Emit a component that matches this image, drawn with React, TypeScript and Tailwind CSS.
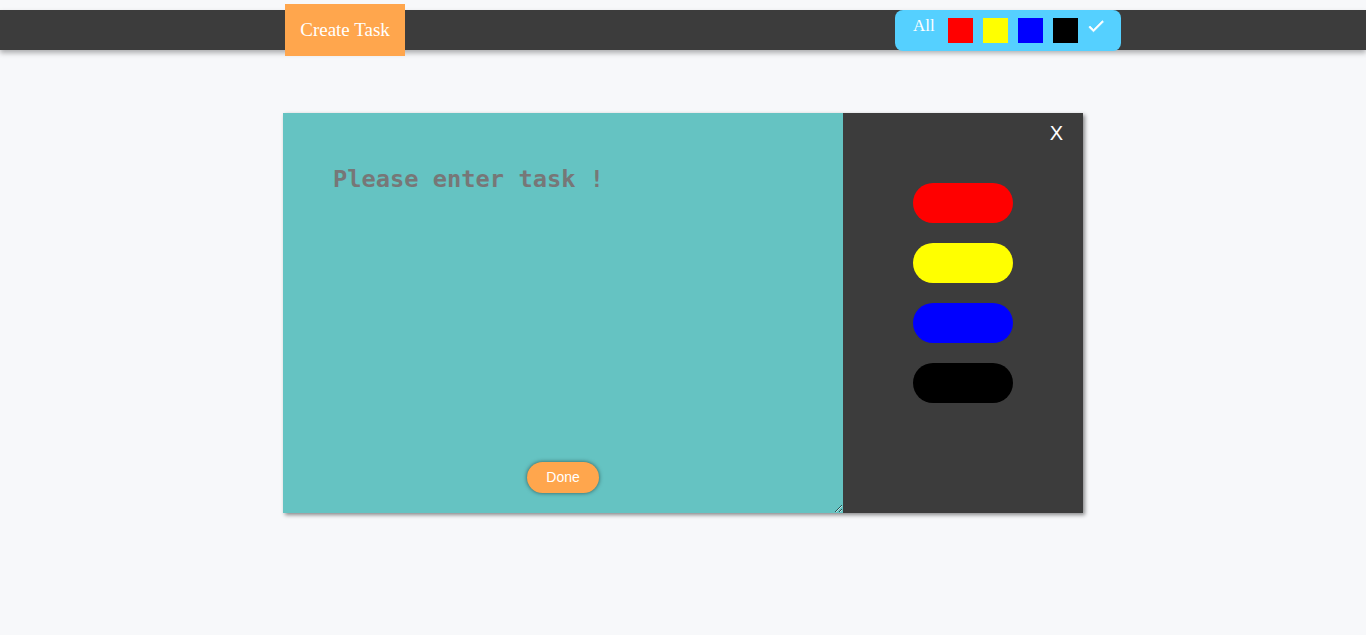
import React from "react";

export default function App() {
  return (
    <div className="min-h-[635px] w-full bg-[#f7f8fa] pt-[10px]" style={{ fontFamily: '"Liberation Serif", serif' }}>
      <div className="relative flex h-[40px] items-start bg-[#3c3c3c] shadow-[0_3px_5px_rgba(0,0,0,0.3)]">
        <button className="ml-[285px] -mt-[6px] flex h-[52px] w-[120px] items-center justify-center bg-[#ffa64d] text-[19px] text-white" style={{ fontFamily: '"Liberation Serif", serif' }}>
          Create Task
        </button>
        <div className="ml-[490px] flex h-[41px] w-[226px] items-start rounded-[8px] bg-[#55d0ff] pl-[18px] pt-[8px]">
          <span className="mt-[-2px] text-[17px] leading-[20px] text-white">All</span>
          <div className="ml-[13px] h-[25px] w-[25px] bg-[#ff0000]" />
          <div className="ml-[10px] h-[25px] w-[25px] bg-[#ffff00]" />
          <div className="ml-[10px] h-[25px] w-[25px] bg-[#0000ff]" />
          <div className="ml-[10px] h-[25px] w-[25px] bg-[#000000]" />
          <svg className="ml-[8px] mt-[-2px]" width="20" height="20" viewBox="0 0 24 24" fill="white">
            <path d="M9 16.17L4.83 12l-1.42 1.41L9 19 21 7l-1.41-1.41z" stroke="white" strokeWidth="0.8" />
          </svg>
        </div>
      </div>

      <div className="ml-[283px] mt-[63px] flex h-[400px] w-[800px] shadow-[2px_2px_4px_rgba(0,0,0,0.45)]">
        <div className="relative h-full w-[560px]">
          <textarea
            className="block h-full w-full resize bg-[#65c3c2] pl-[50px] pr-[20px] pt-[52px] text-[23.7px] font-bold leading-[28px] text-[#444] outline-none placeholder:text-[#777]"
            style={{ fontFamily: '"DejaVu Sans Mono", monospace' }}
            placeholder="Please enter task !"
          />
          <button
            className="absolute left-[244px] top-[349px] flex h-[31px] w-[72px] items-center justify-center rounded-full bg-[#ffa64d] text-[14px] text-white shadow-[0_0_4px_rgba(0,0,0,0.55)]"
            style={{ fontFamily: '"Liberation Sans", Arial, sans-serif' }}
          >
            Done
          </button>
        </div>
        <div className="flex h-full w-[240px] flex-col items-center bg-[#3c3c3c]">
          <div className="flex h-[32px] w-full justify-end pr-[20px] pt-[8px]">
            <span className="text-[20px] leading-[24px] text-white" style={{ fontFamily: '"Liberation Sans", Arial, sans-serif' }}>X</span>
          </div>
          <div className="mt-[38px] flex flex-col gap-[20px]">
            <div className="h-[40px] w-[100px] rounded-full bg-[#ff0000]" />
            <div className="h-[40px] w-[100px] rounded-full bg-[#ffff00]" />
            <div className="h-[40px] w-[100px] rounded-full bg-[#0000ff]" />
            <div className="h-[40px] w-[100px] rounded-full bg-[#000000]" />
          </div>
        </div>
      </div>
    </div>
  );
}
